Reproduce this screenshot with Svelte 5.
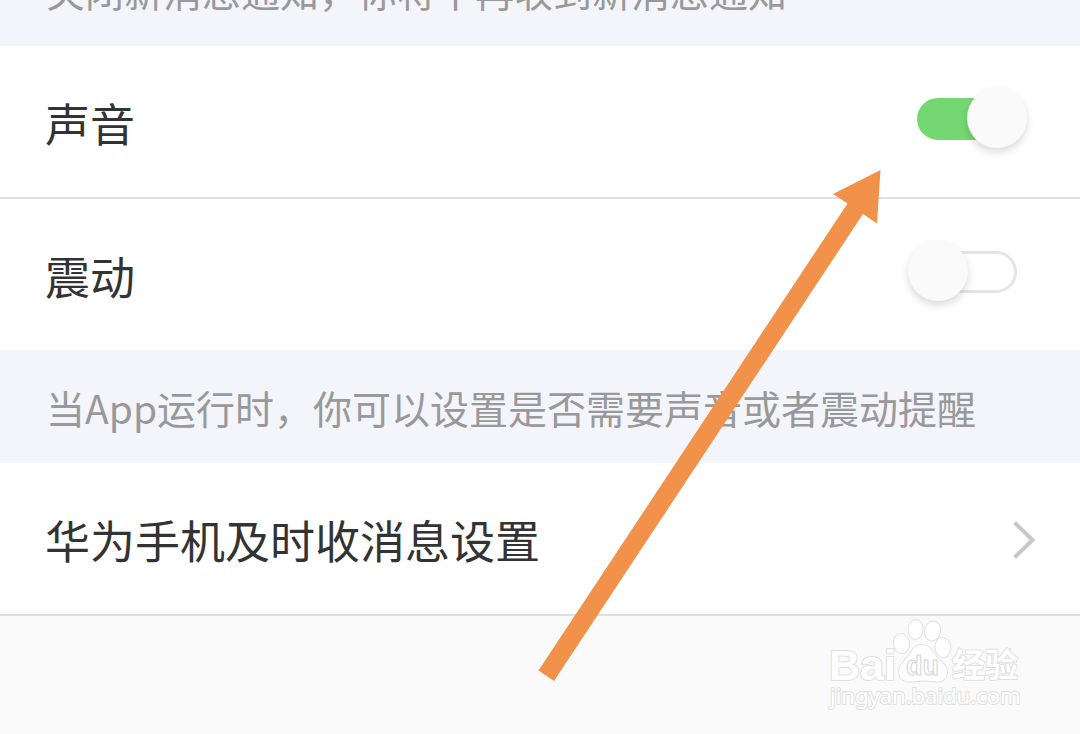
<script>
  let sound = $state(true);
  let vibrate = $state(false);
</script>

<main class="page">
  <p class="hint first">关闭新消息通知，你将不再收到新消息通知</p>

  <section class="group">
    <label class="row">
      <span class="title">声音</span>
      <input class="switch" type="checkbox" role="switch" bind:checked={sound} />
    </label>
    <label class="row divided">
      <span class="title">震动</span>
      <input class="switch" type="checkbox" role="switch" bind:checked={vibrate} />
    </label>
  </section>

  <p class="hint">当App运行时，你可以设置是否需要声音或者震动提醒</p>

  <section class="group last">
    <a class="row link" href="#timely">
      <span class="title">华为手机及时收消息设置</span>
      <svg class="chevron" width="24" height="40" viewBox="0 0 24 40" aria-hidden="true">
        <path d="M2.5 2.5 L20.5 20 L2.5 37.5" fill="none" stroke="#c8c8c8" stroke-width="4" />
      </svg>
    </a>
  </section>

  <svg class="arrow" width="344" height="514" viewBox="0 0 344 514" aria-hidden="true">
    <path d="M342.5 2 L295 26 L309.5 35.5 L0.5 502.5 L16 513 L325 46 L339 55.5 Z" fill="#f2924a" />
  </svg>

  <svg class="mark" width="204" height="100" viewBox="0 0 204 100" role="img" aria-label="Baidu 经验">
    <g fill="#fff" stroke="#e0e0e0" stroke-width="2" stroke-linejoin="round" paint-order="stroke">
      <text class="latin" x="5" y="65" font-size="43">Bai</text>
      <ellipse cx="77.5" cy="28.5" rx="7.5" ry="9.5" transform="rotate(-8 77.5 28.5)" />
      <ellipse cx="91.5" cy="14.5" rx="7" ry="9.5" />
      <ellipse cx="108.5" cy="16" rx="7.500" ry="9.5" transform="rotate(12 108.5 16)" />
      <ellipse cx="119" cy="32.5" rx="7.5" ry="9.5" transform="rotate(-8 119 32.5)" />
      <path d="M98 30 C105 30 109 36 112 41 C117 47 123 50 123 57 C123 64 118 67 112 66.5 C107 66 103 65.5 98 65.5 C93 65.5 89 67 84 66.5 C78 66 75 62 75 56 C75 49 81 46 85 40 C88 35 91 30 98 30 Z" />
      <text class="han" x="128" y="62" font-size="33">经验</text>
      <text class="url" x="6" y="89" font-size="22">jingyan.baidu.com</text>
    </g>
    <text class="du" x="82" y="60" font-size="27">du</text>
  </svg>
</main>

<style>
  :global(body) {
    margin: 0;
    background: #fafafa;
  }

  .page {
    position: relative;
    display: flex;
    flex-direction: column;
    min-height: 100vh;
    overflow: hidden;
    background: #fafafa;
    font-family: "Noto Sans CJK SC", sans-serif;
  }

  .hint {
    margin: 0;
    padding: 29px 46px 28px;
    background: #f4f5fa;
    color: #999;
    font-size: 39px;
    line-height: 56px;
    white-space: nowrap;
  }

  .first {
    margin-top: -67px;
  }

  .group {
    background: #fff;
  }

  .last {
    border-bottom: 2px solid #e0e0e2;
  }

  .row {
    display: flex;
    align-items: center;
    justify-content: space-between;
    padding: 45px 63px 42px 45px;
    color: #333;
    text-decoration: none;
  }

  .divided {
    border-top: 2px solid #e0e0e0;
  }

  .link {
    padding-right: 44px;
  }

  .title {
    font-size: 45px;
    line-height: 64px;
  }

  .switch {
    appearance: none;
    position: relative;
    box-sizing: border-box;
    flex: none;
    width: 100px;
    height: 42px;
    margin: 0 0 8px;
    border: 3px solid #e5e5e5;
    border-radius: 21px;
    background: #fff;
  }

  .switch::before {
    content: "";
    position: absolute;
    top: -13px;
    left: -12px;
    width: 60px;
    height: 60px;
    border-radius: 50%;
    background: #fafafa;
    box-shadow: 0 4px 8px rgba(0, 0, 0, 0.15);
  }

  .switch:checked {
    border-color: #75d772;
    background: #75d772;
  }

  .switch:checked::before {
    left: 47px;
  }

  .chevron {
    flex: none;
  }

  .arrow {
    position: absolute;
    top: 168px;
    left: 538px;
    pointer-events: none;
  }

  .mark {
    position: absolute;
    right: 52px;
    bottom: 19px;
  }

  .latin {
    font-family: "Liberation Sans", sans-serif;
    font-weight: 700;
  }

  .han {
    font-weight: 700;
  }

  .url {
    font-family: "Noto Sans", sans-serif;
  }

  .du {
    font-family: "Liberation Sans", sans-serif;
    font-weight: 700;
    fill: #fff;
    stroke: #d4d4d4;
    stroke-width: 1px;
  }
</style>
